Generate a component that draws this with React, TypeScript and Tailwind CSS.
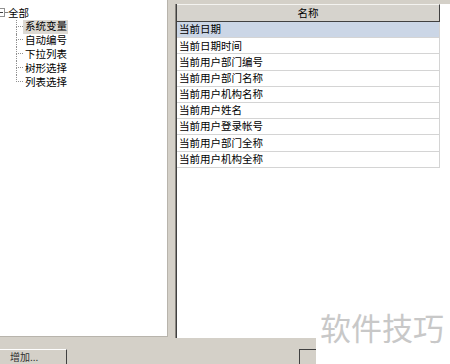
import React from "react";

const font = { fontFamily: '"Noto Sans CJK SC", "Noto Sans", sans-serif' };

const treeChildren = ["系统变量", "自动编号", "下拉列表", "树形选择", "列表选择"];
const rows = [
  "当前日期",
  "当前日期时间",
  "当前用户部门编号",
  "当前用户部门名称",
  "当前用户机构名称",
  "当前用户姓名",
  "当前用户登录帐号",
  "当前用户部门全称",
  "当前用户机构全称",
];

export default function App() {
  return (
    <div
      className="relative w-[450px] h-[364px] overflow-hidden bg-[#d4d0c8] text-black flex flex-col"
      style={font}
    >
      <div className="flex h-[338px]">
        {/* left tree panel */}
        <div className="w-[168px] h-[337px] bg-white border-r border-b border-[#b8b4ac] pt-[6px] text-[10.5px]">
          <div className="flex items-center h-[13.8px]">
            <div className="-ml-[4px] w-[9px] h-[9px] border border-[#909090] bg-white flex items-center justify-center">
              <div className="w-[5px] h-px bg-[#404040]" />
            </div>
            <div className="w-[2px] border-t border-dotted border-[#808080]" />
            <span className="ml-[1px] leading-none">全部</span>
          </div>
          {treeChildren.map((t, i) => (
            <div key={t} className="flex h-[13.8px] pl-[16px]">
              <div className="w-[7px] h-full flex flex-col">
                <div className="h-1/2 border-l border-b border-dotted border-[#909090]" />
                <div
                  className={
                    i === treeChildren.length - 1
                      ? "h-1/2"
                      : "h-1/2 border-l border-dotted border-[#909090]"
                  }
                />
              </div>
              <div
                className={
                  "flex items-center px-[1px] leading-none " +
                  (i === 0 ? "bg-[#dcd9d3]" : "")
                }
              >
                <span className="ml-[1px]">{t}</span>
              </div>
            </div>
          ))}
        </div>

        <div className="w-[7px]" />

        {/* right list panel */}
        <div className="flex-1 mt-[4px] h-[334px] border-l border-[#8a8680]">
          <div className="h-full border-l border-[#404040] bg-white">
            <div className="w-[263px] text-[10.5px]">
              <div className="h-[18px] bg-[#d6d3cd] border-t border-[#f4f3f0] border-b border-r border-b-[#404040] border-r-[#404040] flex items-center justify-center leading-none">
                名称
              </div>
              {rows.map((r, i) => (
                <div
                  key={r}
                  className={
                    "h-[16.2px] flex items-center pl-[2px] leading-none border-b border-r border-[#d4d4d4] " +
                    (i === 0 ? "bg-[#cbd6e6]" : "bg-white")
                  }
                >
                  {r}
                </div>
              ))}
            </div>
          </div>
        </div>
      </div>

      {/* bottom bar */}
      <div className="h-[26px] relative">
        <div className="flex mt-[11px]">
          <div className="w-[67px] h-[16px] border-t border-[#ffffff] border-r border-r-[#404040] flex items-start pl-[10px] pt-[2px] text-[10px] leading-none text-[#303030]">
            增加...
          </div>
          <div className="ml-[232px] w-[40px] h-[16px] border-t border-l border-[#404040]" />
        </div>
      </div>

      {/* watermark */}
      <div className="absolute left-[316px] top-[300px] w-[134px] h-[64px] bg-white pl-[4px] pt-[11px]">
        <span className="text-[31px] leading-none text-[#c8c8c8] tracking-[0px]">软件技巧</span>
      </div>
    </div>
  );
}
